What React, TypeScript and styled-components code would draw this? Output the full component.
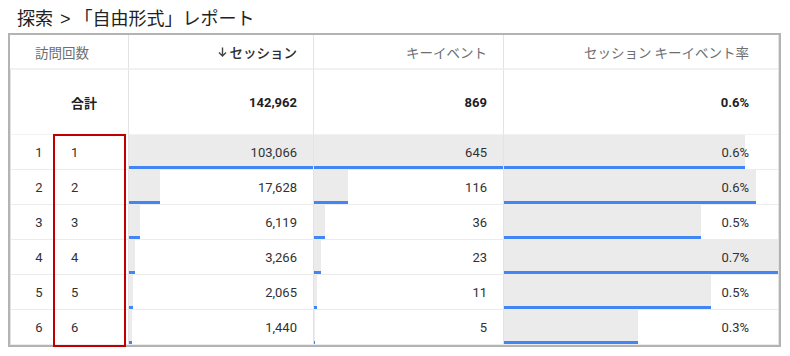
import React from 'react'
import styled, { createGlobalStyle } from 'styled-components'

type Row = {
  index: number
  visits: string
  sessions: number
  keyEvents: number
  rateLabel: string
  rateWidth: number
}

const rows: Row[] = [
  { index: 1, visits: '1', sessions: 103066, keyEvents: 645, rateLabel: '0.6%', rateWidth: 241 },
  { index: 2, visits: '2', sessions: 17628, keyEvents: 116, rateLabel: '0.6%', rateWidth: 252 },
  { index: 3, visits: '3', sessions: 6119, keyEvents: 36, rateLabel: '0.5%', rateWidth: 197 },
  { index: 4, visits: '4', sessions: 3266, keyEvents: 23, rateLabel: '0.7%', rateWidth: 274 },
  { index: 5, visits: '5', sessions: 2065, keyEvents: 11, rateLabel: '0.5%', rateWidth: 207 },
  { index: 6, visits: '6', sessions: 1440, keyEvents: 5, rateLabel: '0.3%', rateWidth: 134 },
]

const MAX_SESSIONS = 103066
const MAX_KEY = 645
const SESSION_COL = 184
const KEY_COL = 189

const fmt = (n: number) => n.toLocaleString('en-US')

const SortArrow = () => (
  <ArrowSvg width='9' height='10' viewBox='0 0 9 10'>
    <path d='M4.5 0.5 V9 M1 5.5 L4.5 9 L8 5.5' fill='none' stroke='#444' strokeWidth='1.4' />
  </ArrowSvg>
)

const App: React.FC = () => {
  return (
    <Page>
      <GlobalStyle />
      <Title>
        探索<Sep>&gt;</Sep>「自由形式」レポート
      </Title>
      <Frame>
        <Table>
          <HeadCell align='left'>訪問回数</HeadCell>
          <HeadCell sorted>
            <SortArrow />
            セッション
          </HeadCell>
          <HeadCell>キーイベント</HeadCell>
          <HeadCell wide>セッション キーイベント率</HeadCell>

          <TotalCell align='left'>
            <IndexSpan />
            合計
          </TotalCell>
          <TotalCell>142,962</TotalCell>
          <TotalCell>869</TotalCell>
          <TotalCell wide>0.6%</TotalCell>

          {rows.map((row) => (
            <React.Fragment key={row.index}>
              <DataCell align='left'>
                <IndexSpan>{row.index}</IndexSpan>
                {row.visits}
              </DataCell>
              <DataCell>
                <Bar style={{ width: (row.sessions / MAX_SESSIONS) * SESSION_COL }} />
                <Value>{fmt(row.sessions)}</Value>
              </DataCell>
              <DataCell>
                <Bar style={{ width: (row.keyEvents / MAX_KEY) * KEY_COL }} />
                <Value>{fmt(row.keyEvents)}</Value>
              </DataCell>
              <DataCell wide>
                <Bar style={{ width: row.rateWidth }} />
                <Value>{row.rateLabel}</Value>
              </DataCell>
            </React.Fragment>
          ))}
        </Table>
        <Highlight />
      </Frame>
    </Page>
  )
}

export default App

const GlobalStyle = createGlobalStyle`
  body {
    margin: 0;
    background: #ffffff;
    font-family: Roboto, "Noto Sans CJK JP", sans-serif;
  }
`

const Page = styled.div`
  width: 790px;
  height: 356px;
  overflow: hidden;
  background: #fff;
`

const Title = styled.div`
  height: 33px;
  padding: 5px 0 0 17px;
  box-sizing: border-box;
  font-family: "Noto Sans CJK JP", sans-serif;
  font-size: 18px;
  line-height: 24px;
  color: #222;
`

const Sep = styled.span`
  font-family: "Liberation Sans", sans-serif;
  margin: 0 4px 0 7px;
`

const Frame = styled.div`
  position: relative;
  margin-left: 8px;
  width: 773px;
  height: 314px;
  box-sizing: border-box;
  border: 2px solid #b3b3b3;
`

const Table = styled.div`
  display: grid;
  grid-template-columns: 118px 185px 190px 275px;
  width: 769px;
  box-sizing: border-box;
  border-right: 1px solid #e3e3e3;
`

type CellProps = { align?: 'left'; wide?: boolean; sorted?: boolean }

const BaseCell = styled.div<CellProps>`
  position: relative;
  box-sizing: border-box;
  display: flex;
  align-items: center;
  justify-content: ${(p) => (p.align === 'left' ? 'flex-start' : 'flex-end')};
  padding-right: ${(p) => (p.align === 'left' ? 0 : p.wide ? 29 : 16)}px;
  & + & {
    border-left: 1px solid #e3e3e3;
  }
  &:nth-child(4n + 1) {
    border-left: none;
  }
`

const HeadCell = styled(BaseCell)`
  height: 35px;
  border-bottom: 2px solid #f1f1f1;
  padding-left: ${(p) => (p.align === 'left' ? 25 : 0)}px;
  font-family: "Noto Sans CJK JP", sans-serif;
  font-size: 13.5px;
  color: ${(p) => (p.sorted ? '#2a2c30' : '#6b6f73')};
  font-weight: ${(p) => (p.sorted ? 500 : 400)};
`

const ArrowSvg = styled.svg`
  margin-right: 3px;
  margin-top: 1px;
`

const TotalCell = styled(BaseCell)`
  height: 65px;
  border-bottom: 1px solid #f1f1f1;
  font-size: 13px;
  font-weight: 700;
  color: #202124;
`

const DataCell = styled(BaseCell)`
  height: 35px;
  border-bottom: 1px solid #ececec;
  font-size: 13px;
  color: #303134;
`

const IndexSpan = styled.span`
  width: 56px;
  margin-right: 4px;
  text-align: center;
`

const Bar = styled.div`
  position: absolute;
  left: 0;
  top: 0;
  bottom: 0;
  background: #ebebeb;
  border-bottom: 3px solid #4285f4;
  box-sizing: border-box;
`

const Value = styled.span`
  position: relative;
`

const Highlight = styled.div`
  position: absolute;
  left: 43px;
  top: 99px;
  width: 73px;
  height: 213px;
  box-sizing: border-box;
  border: 2px solid #c00000;
  pointer-events: none;
`
